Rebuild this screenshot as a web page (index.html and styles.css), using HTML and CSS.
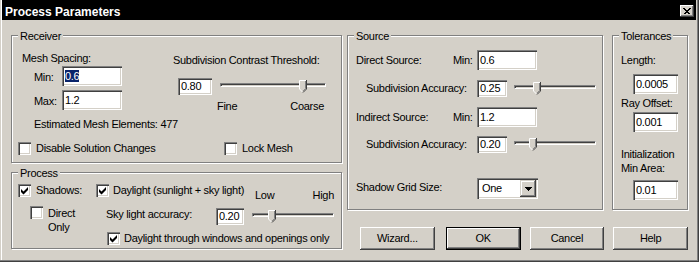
FILE: index.html
```html
<!DOCTYPE html>
<html>
<head>
<meta charset="utf-8">
<title>Process Parameters</title>
<link rel="stylesheet" href="styles.css">
</head>
<body>
<div class="window">
  <div class="titlebar">
    <span class="title">Process Parameters</span>
    <span class="close"><svg width="8" height="7" viewBox="0 0 8 7" shape-rendering="crispEdges"><path d="M0.5 0.5L6.5 6.5M1.5 0.5L7.5 6.5M6.5 0.5L0.5 6.5M7.5 0.5L1.5 6.5" stroke="#000" stroke-width="1" fill="none"/></svg></span>
  </div>
  <div class="client">
    <div class="col-left">
      <div class="group receiver">
        <span class="legend">Receiver</span>
        <div class="rc-top">
          <div class="mesh">
            <div class="lbl">Mesh Spacing:</div>
            <div class="mesh-row"><span class="lbl mm">Min:</span><div class="edit w60"><span class="sel">0.6</span></div></div>
            <div class="mesh-row mt4"><span class="lbl mm">Max:</span><div class="edit w60">1.2</div></div>
            <div class="lbl est">Estimated Mesh Elements: 477</div>
          </div>
          <div class="thresh">
            <div class="lbl">Subdivision Contrast Threshold:</div>
            <div class="thr-row">
              <div class="edit sm w34">0.80</div>
              <div class="slider w106"><div class="track"></div><svg class="thumb" style="left:79px" width="8" height="13" viewBox="0 0 8 13"><polygon points="0,0 8,0 8,9 4,13 0,9" fill="#d4d0c8"/><path d="M0.5 9V0.5H7M0.5 9L3.5 12" stroke="#fff" fill="none"/><path d="M7.5 0V9L4 12.5" stroke="#404040" fill="none"/><path d="M6.5 1V8.6L4 11.2" stroke="#808080" fill="none"/></svg></div>
            </div>
            <div class="fine-coarse"><span>Fine</span><span>Coarse</span></div>
          </div>
        </div>
        <div class="rc-bottom">
          <div class="cb w206"><span class="box"></span><span>Disable Solution Changes</span></div>
          <div class="cb"><span class="box"></span><span>Lock Mesh</span></div>
        </div>
      </div>

      <div class="group process">
        <span class="legend">Process</span>
        <div class="pgrid">
          <div class="cb g-shadows"><span class="box"><svg width="13" height="13" viewBox="0 0 13 13"><polygon points="3,5 5.5,7.5 10,3 10,6 5.5,10.5 3,8" fill="#000"/></svg></span><span>Shadows:</span></div>
          <div class="cb g-day"><span class="box"><svg width="13" height="13" viewBox="0 0 13 13"><polygon points="3,5 5.5,7.5 10,3 10,6 5.5,10.5 3,8" fill="#000"/></svg></span><span>Daylight (sunlight + sky light)</span></div>
          <div class="lowhigh"><span>Low</span><span>High</span></div>
          <div class="cb g-direct"><span class="box"></span><span class="two">Direct<br>Only</span></div>
          <div class="g-sky">
            <span class="lbl sky-lbl">Sky light accuracy:</span>
            <div class="edit sm w28">0.20</div>
          </div>
          <div class="slider w82 g-slider"><div class="track"></div><svg class="thumb" style="left:16px" width="8" height="13" viewBox="0 0 8 13"><polygon points="0,0 8,0 8,9 4,13 0,9" fill="#d4d0c8"/><path d="M0.5 9V0.5H7M0.5 9L3.5 12" stroke="#fff" fill="none"/><path d="M7.5 0V9L4 12.5" stroke="#404040" fill="none"/><path d="M6.5 1V8.6L4 11.2" stroke="#808080" fill="none"/></svg></div>
          <div class="cb g-through"><span class="box"><svg width="13" height="13" viewBox="0 0 13 13"><polygon points="3,5 5.5,7.5 10,3 10,6 5.5,10.5 3,8" fill="#000"/></svg></span><span>Daylight through windows and openings only</span></div>
        </div>
      </div>
    </div>

    <div class="col-right">
      <div class="top-row">
        <div class="group source">
          <span class="legend">Source</span>
          <div class="srow">
            <span class="lbl s-main">Direct Source:</span><span class="lbl s-min">Min:</span>
            <div class="edit w60">0.6</div>
          </div>
          <div class="srow sub">
            <span class="lbl s-sub">Subdivision Accuracy:</span>
            <div class="edit sm w30">0.25</div>
            <div class="slider w82 s-slider"><div class="track"></div><svg class="thumb" style="left:19px" width="8" height="13" viewBox="0 0 8 13"><polygon points="0,0 8,0 8,9 4,13 0,9" fill="#d4d0c8"/><path d="M0.5 9V0.5H7M0.5 9L3.5 12" stroke="#fff" fill="none"/><path d="M7.5 0V9L4 12.5" stroke="#404040" fill="none"/><path d="M6.5 1V8.6L4 11.2" stroke="#808080" fill="none"/></svg></div>
          </div>
          <div class="srow ind">
            <span class="lbl s-main">Indirect Source:</span><span class="lbl s-min">Min:</span>
            <div class="edit w60">1.2</div>
          </div>
          <div class="srow sub sub2">
            <span class="lbl s-sub">Subdivision Accuracy:</span>
            <div class="edit sm w30">0.20</div>
            <div class="slider w82 s-slider"><div class="track"></div><svg class="thumb" style="left:15px" width="8" height="13" viewBox="0 0 8 13"><polygon points="0,0 8,0 8,9 4,13 0,9" fill="#d4d0c8"/><path d="M0.5 9V0.5H7M0.5 9L3.5 12" stroke="#fff" fill="none"/><path d="M7.5 0V9L4 12.5" stroke="#404040" fill="none"/><path d="M6.5 1V8.6L4 11.2" stroke="#808080" fill="none"/></svg></div>
          </div>
          <div class="srow grid-row">
            <span class="lbl s-grid">Shadow Grid Size:</span>
            <div class="combo"><span class="combo-text">One</span><span class="dd"><svg width="7" height="4" viewBox="0 0 7 4" shape-rendering="crispEdges"><rect x="0" y="0" width="7" height="1"/><rect x="1" y="1" width="5" height="1"/><rect x="2" y="2" width="3" height="1"/><rect x="3" y="3" width="1" height="1"/></svg></span></div>
          </div>
        </div>

        <div class="group tol">
          <span class="legend">Tolerances</span>
          <div class="lbl t-len">Length:</div>
          <div class="edit w45 t-e1">0.0005</div>
          <div class="lbl t-ray">Ray Offset:</div>
          <div class="edit w45 t-e2">0.001</div>
          <div class="lbl two t-init">Initialization<br>Min Area:</div>
          <div class="edit w45 t-e3">0.01</div>
        </div>
      </div>

      <div class="buttons">
        <div class="btn wiz">Wizard...</div>
        <div class="btn default">OK</div>
        <div class="btn gap">Cancel</div>
        <div class="btn gap">Help</div>
      </div>
    </div>
  </div>
</div>
</body>
</html>
```
FILE: styles.css
```css
* { box-sizing: border-box; }
html, body { margin: 0; padding: 0; }
body {
  background: #d4d0c8;
  font: 11px/13px "Liberation Sans", Arial, sans-serif;
  letter-spacing: -0.3px;
  color: #000;
}
.window {
  width: 699px;
  height: 262px;
  background: #d4d0c8;
  padding: 0 3px 2px 2px;
  box-shadow: inset -1px -1px #404040, inset -2px -2px #808080, inset 1px 0 #d4d0c8, inset 2px 0 #fff;
  display: flex;
  flex-direction: column;
}
.titlebar {
  height: 20px;
  flex: none;
  background: #000;
  color: #fff;
  display: flex;
  align-items: flex-start;
  padding: 5px 2px 0 3px;
  font: bold 12px/14px "Liberation Sans", Arial, sans-serif;
  letter-spacing: 0;
}
.close {
  margin-left: auto;
  width: 14px;
  height: 12px;
  background: #d4d0c8;
  box-shadow: inset -1px -1px #404040, inset 1px 1px #fff, inset -2px -2px #808080;
  display: flex;
  align-items: center;
  justify-content: center;
}
.close svg { display: block; margin-top: 1px; }

.client { display: flex; padding: 15px 0 0 9px; }
.col-left { width: 331px; display: flex; flex-direction: column; gap: 9px; }
.col-right { margin-left: 5px; width: 341px; }
.top-row { display: flex; gap: 9px; }

.group {
  position: relative;
  border: 1px solid #808080;
  box-shadow: inset 1px 1px #fff, 1px 1px #fff;
}
.legend {
  position: absolute;
  top: -6px;
  left: 6px;
  padding: 0 2px;
  background: #d4d0c8;
}
.lbl { white-space: nowrap; }
.two { line-height: 14px; }

.edit {
  height: 20px;
  background: #fff;
  box-shadow: inset 1px 1px #808080, inset 2px 2px #404040, inset -1px -1px #fff, inset -2px -2px #d4d0c8;
  padding: 4px 0 0 3px;
  white-space: nowrap;
  flex: none;
}
.edit.sm { height: 17px; padding-top: 2px; }
.w60 { width: 60px; }
.w45 { width: 45px; }
.w34 { width: 34px; }
.w30 { width: 30px; }
.w28 { width: 28px; }
.sel { background: #0a246a; color: #fff; }

.slider { position: relative; height: 17px; flex: none; }
.w106 { width: 106px; }
.w82 { width: 82px; }
.track {
  margin-top: 5px;
  height: 4px;
  border-top: 1px solid #808080;
  border-left: 1px solid #808080;
  border-bottom: 1px solid #fff;
  border-right: 1px solid #fff;
  box-shadow: inset 1px 1px #404040, inset -1px -1px #d4d0c8;
}
.thumb { position: absolute; top: 2px; display: block; }

.cb { display: flex; align-items: flex-start; gap: 5px; white-space: nowrap; }
.box {
  width: 13px;
  height: 13px;
  flex: none;
  background: #fff;
  box-shadow: inset 1px 1px #808080, inset 2px 2px #404040, inset -1px -1px #fff, inset -2px -2px #d4d0c8;
}
.box svg { display: block; }

/* Receiver */
.receiver { height: 128px; padding: 16px 0 0 10px; }
.rc-top { display: flex; }
.mesh { width: 151px; }
.mesh-row { display: flex; align-items: flex-start; margin: 1px 0 0 12px; }
.mesh-row.mt4 { margin-top: 4px; }
.mm { width: 28px; padding-top: 5px; }
.est { margin: 8px 0 0 12px; }
.thresh { padding-top: 2px; }
.thr-row { display: flex; margin: 11px 0 0 5px; }
.thr-row .slider { margin-left: 8px; }
.fine-coarse { display: flex; justify-content: space-between; width: 107px; margin: 5px 0 0 44px; }
.rc-bottom { display: flex; margin: 11px 0 0 -4px; }
.w206 { width: 206px; }

/* Process */
.process { height: 77px; padding: 11px 0 0 6px; }
.pgrid {
  display: grid;
  grid-template-columns: 78px 156px 82px;
  grid-template-rows: 13px 10px 18px 7px 13px;
}
.g-shadows { grid-row: 1; grid-column: 1; }
.g-day { grid-row: 1; grid-column: 2; gap: 4px; }
.lowhigh {
  grid-row: 1 / 3;
  grid-column: 3;
  margin-top: 5px;
  padding-left: 3px;
  display: flex;
  justify-content: space-between;
}
.g-direct { grid-row: 3 / 6; grid-column: 1; margin: -1px 0 0 12px; }
.g-sky { grid-row: 3; grid-column: 2; display: flex; align-items: flex-start; padding-top: 1px; }
.sky-lbl { margin-left: 10px; }
.g-sky .edit { margin-left: auto; margin-right: 8px; }
.g-slider { grid-row: 3; grid-column: 3; margin-top: 1px; }
.g-through { grid-row: 5; grid-column: 2 / 4; margin-left: 11px; gap: 4px; }

/* Source */
.source { width: 256px; height: 175px; padding: 14px 0 0 8px; }
.srow { display: flex; align-items: flex-start; }
.s-main { width: 97px; padding-top: 4px; }
.s-min { width: 24px; padding-top: 4px; }
.srow.sub { margin-top: 10px; }
.s-sub { width: 111px; margin-left: 10px; padding-top: 2px; }
.s-slider { margin-left: 7px; }
.srow.ind { margin-top: 10px; }
.srow.sub2 { margin-top: 9px; }
.srow.grid-row { margin-top: 25px; }
.s-grid { width: 121px; padding-top: 3px; }
.combo {
  width: 61px;
  height: 21px;
  background: #fff;
  box-shadow: inset 1px 1px #808080, inset 2px 2px #404040, inset -1px -1px #fff, inset -2px -2px #d4d0c8;
  padding: 2px;
  display: flex;
}
.combo-text { flex: 1; padding: 2px 0 0 3px; }
.dd {
  width: 16px;
  background: #d4d0c8;
  box-shadow: inset -1px -1px #404040, inset 1px 1px #d4d0c8, inset -2px -2px #808080, inset 2px 2px #fff;
  display: flex;
  align-items: center;
  justify-content: center;
}
.dd svg { display: block; }

/* Tolerances */
.tol { width: 76px; height: 175px; padding: 18px 0 0 8px; }
.tol .edit { margin-left: 12px; }
.t-e1 { margin-top: 7px; }
.t-ray { margin-top: 3px; }
.t-e2 { margin-top: 2px; }
.t-init { margin-top: 15px; }
.t-e3 { margin-top: 5px; }

/* Buttons */
.buttons { display: flex; margin-top: 17px; padding-left: 13px; }
.btn {
  width: 75px;
  height: 23px;
  display: flex;
  align-items: center;
  justify-content: center;
  box-shadow: inset -1px -1px #404040, inset 1px 1px #fff, inset -2px -2px #808080, inset 2px 2px #d4d0c8;
}
.btn.wiz { margin-right: 11px; }
.btn.default {
  border: 1px solid #000;
  box-shadow: inset -1px -1px #404040, inset 1px 1px #fff, inset -2px -2px #808080;
}
.btn.gap { margin-left: 9px; }
```
